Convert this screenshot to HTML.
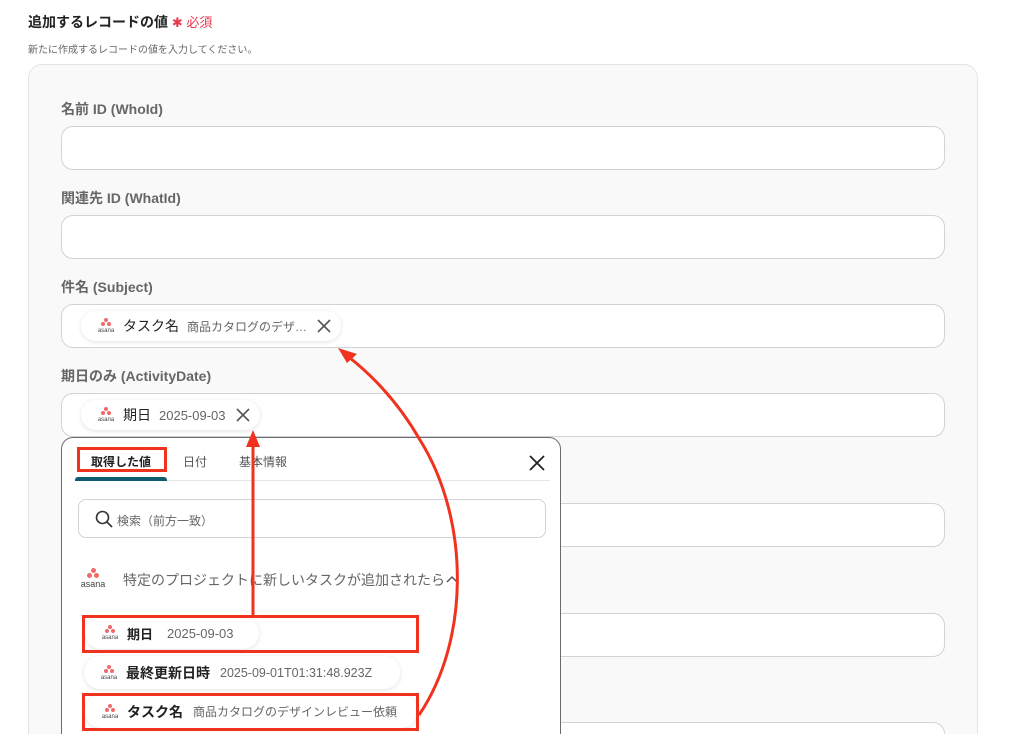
<!DOCTYPE html>
<html style="width:1010px;height:734px;overflow:hidden"><head><meta charset="utf-8"><style>
*{box-sizing:border-box;margin:0;padding:0}
body{width:1010px;height:734px;overflow:hidden;background:#fff;font-family:"Liberation Sans","Noto Sans CJK JP",sans-serif;position:relative;color:#333}
.a{position:absolute}
.panel{left:28px;top:64px;width:950px;height:700px;background:#f9f9fa;border:1px solid #e3e4e8;border-radius:14px}
.lbl{left:61px;font-size:14px;font-weight:bold;color:#666}
.inp{left:61px;width:884px;height:44px;background:#fff;border:1px solid #cfd3da;border-radius:12px}
.chip{position:absolute;height:30px;background:#fff;border-radius:15px;box-shadow:0 1px 5px rgba(0,0,0,.12);display:flex;align-items:center;padding:0 10px 0 14px;font-size:13px;white-space:nowrap}
.logo{width:22px;height:16px;position:relative;margin-right:6px;flex:none}
.logo i{position:absolute;width:4px;height:4px;border-radius:50%;background:#f06a6a}
.logo b{position:absolute;bottom:0;left:0;width:22px;font-size:6px;font-weight:normal;color:#444;text-align:center;line-height:6px}
.k{color:#222;margin-right:8px}
.v{color:#666;font-size:12px}
.x{margin-left:10px;display:block}
.red{position:absolute;border:3px solid #f0321e}
</style></head><body>
<div class="a" style="left:28px;top:12px;font-size:14px;font-weight:bold;color:#222">追加するレコードの値 <span style="color:#e8384f;font-weight:normal;font-size:13px">✱ 必須</span></div>
<div class="a" style="left:28px;top:41px;font-size:10px;color:#666">新たに作成するレコードの値を入力してください。</div>
<div class="a panel"></div>
<div class="a lbl" style="top:99px">名前 ID (WhoId)</div>
<div class="a inp" style="top:126px"></div>
<div class="a lbl" style="top:188px">関連先 ID (WhatId)</div>
<div class="a inp" style="top:215px"></div>
<div class="a lbl" style="top:277px">件名 (Subject)</div>
<div class="a inp" style="top:304px"></div>
<div class="a lbl" style="top:366px">期日のみ (ActivityDate)</div>
<div class="a inp" style="top:393px"></div>
<div class="a inp" style="top:503px"></div>
<div class="a inp" style="top:613px"></div>
<div class="a inp" style="top:722px"></div>

<div class="chip" style="left:81px;top:311px"><span class="logo"><i style="left:9px;top:0"></i><i style="left:6px;top:4px"></i><i style="left:12px;top:4px"></i><b>asana</b></span><span class="k" style="font-size:14px">タスク名</span><span class="v">商品カタログのデザ…</span><svg class="x" width="14" height="14"><path d="M1 1L13 13M13 1L1 13" stroke="#555" stroke-width="1.6"/></svg></div>
<div class="chip" style="left:81px;top:400px"><span class="logo"><i style="left:9px;top:0"></i><i style="left:6px;top:4px"></i><i style="left:12px;top:4px"></i><b>asana</b></span><span class="k" style="font-size:14px">期日</span><span class="v" style="font-size:13px">2025-09-03</span><svg class="x" width="14" height="14"><path d="M1 1L13 13M13 1L1 13" stroke="#555" stroke-width="1.6"/></svg></div>

<div class="a" style="left:61px;top:437px;width:500px;height:310px;background:#fff;border:1px solid #6b6b6b;border-radius:12px">
 <div class="a" style="left:14px;top:42px;width:474px;height:1px;background:#e5e5e5"></div>
 <div class="a" style="left:13px;top:39px;width:92px;height:4px;background:#0e5a6e;border-radius:3px 3px 0 0"></div>
 <div class="a" style="left:29px;top:15px;font-size:12px;font-weight:bold;color:#222">取得した値</div>
 <div class="a" style="left:121px;top:15px;font-size:12px;color:#555">日付</div>
 <div class="a" style="left:177px;top:15px;font-size:12px;color:#555">基本情報</div>
 <svg class="a" style="left:467px;top:17px" width="16" height="16"><path d="M1 1L15 15M15 1L1 15" stroke="#222" stroke-width="1.8"/></svg>
 <div class="a" style="left:16px;top:61px;width:468px;height:39px;border:1px solid #cfd3da;border-radius:8px"></div>
 <svg class="a" style="left:33px;top:72px" width="18" height="18"><circle cx="7.5" cy="7.5" r="6" fill="none" stroke="#333" stroke-width="1.6"/><path d="M12 12L17 17" stroke="#333" stroke-width="1.6"/></svg>
 <div class="a" style="left:55px;top:74px;font-size:12px;color:#666">検索（前方一致）</div>
 <div class="a" style="left:16px;top:130px"><span class="logo" style="display:block;width:30px;height:20px"><i style="left:13px;top:0;width:5px;height:5px"></i><i style="left:9px;top:5px;width:5px;height:5px"></i><i style="left:16px;top:5px;width:5px;height:5px"></i><b style="width:30px;font-size:9px;line-height:8px">asana</b></span></div>
 <div class="a" style="left:61px;top:132px;font-size:14px;color:#666">特定のプロジェクトに新しいタスクが追加されたら</div>
 <svg class="a" style="left:384px;top:137px" width="12" height="8"><path d="M1 7L6 2L11 7" stroke="#555" stroke-width="1.5" fill="none"/></svg>
</div>
<div class="chip" style="left:85px;top:617px;width:174px;height:32px;border-radius:16px"><span class="logo"><i style="left:9px;top:0"></i><i style="left:6px;top:4px"></i><i style="left:12px;top:4px"></i><b>asana</b></span><span class="k" style="font-weight:bold;font-size:13px">期日</span><span class="v" style="margin-left:6px;font-size:13px">2025-09-03</span></div>
<div class="chip" style="left:84px;top:656px;width:316px;height:33px;border-radius:16px"><span class="logo"><i style="left:9px;top:0"></i><i style="left:6px;top:4px"></i><i style="left:12px;top:4px"></i><b>asana</b></span><span class="k" style="font-weight:bold;font-size:14px">最終更新日時</span><span class="v" style="margin-left:2px;font-size:12.5px">2025-09-01T01:31:48.923Z</span></div>
<div class="chip" style="left:85px;top:695px;width:332px;height:33px;border-radius:16px"><span class="logo"><i style="left:9px;top:0"></i><i style="left:6px;top:4px"></i><i style="left:12px;top:4px"></i><b>asana</b></span><span class="k" style="font-weight:bold;font-size:14px">タスク名</span><span class="v" style="margin-left:2px">商品カタログのデザインレビュー依頼</span></div>

<div class="red" style="left:77px;top:447px;width:90px;height:25px"></div>
<div class="red" style="left:82px;top:615px;width:337px;height:38px"></div>
<div class="red" style="left:82px;top:693px;width:337px;height:38px"></div>
<svg class="a" style="left:0;top:0" width="1010" height="734">
 <path d="M253 615V445" stroke="#f0321e" stroke-width="3" fill="none"/>
 <path d="M246 447L253 430L260 447Z" fill="#f0321e"/>
 <path d="M419 715C470 640 470 520 420 440C400 405 375 378 350 358" stroke="#f0321e" stroke-width="3" fill="none"/>
 <path d="M338 348L357 354L347 363Z" fill="#f0321e"/>
</svg>
</body></html>
